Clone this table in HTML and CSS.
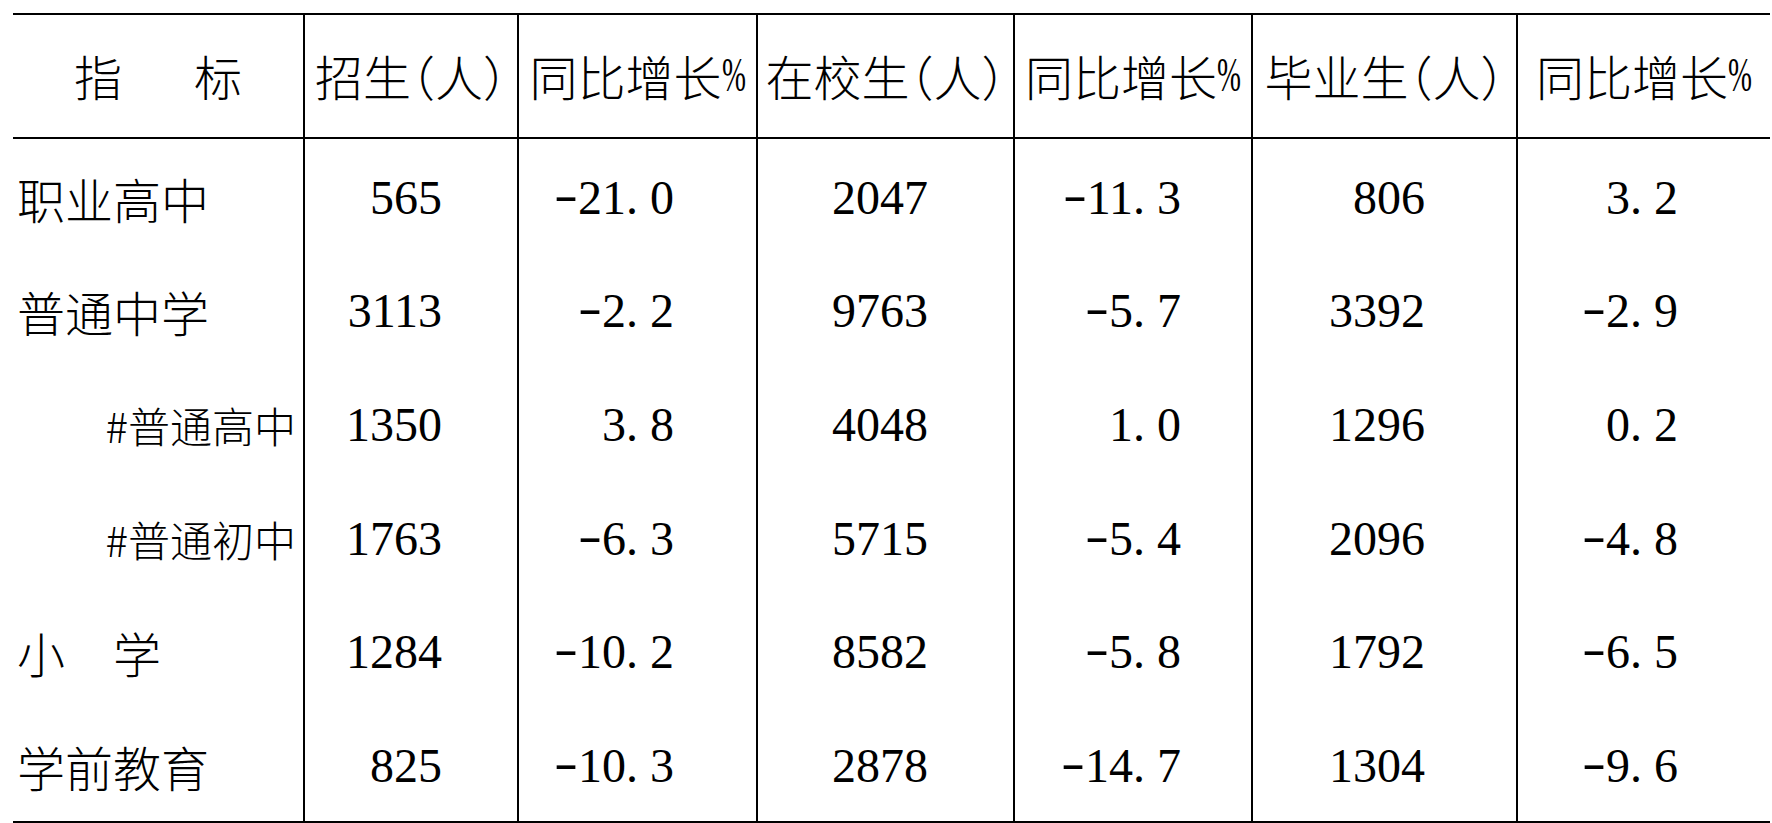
FILE: index.html
```html
<!DOCTYPE html>
<html lang="zh-CN">
<head>
<meta charset="utf-8">
<title>教育统计</title>
<link rel="stylesheet" href="styles.css">
</head>
<body>
<div class="page">
  <div class="sheet">
    <div class="cell head first">指<span class="gap"></span>标</div>
    <div class="cell head">招生（人）</div>
    <div class="cell head">同比增长<span class="pct">%</span></div>
    <div class="cell head">在校生（人）</div>
    <div class="cell head">同比增长<span class="pct">%</span></div>
    <div class="cell head">毕业生（人）</div>
    <div class="cell head">同比增长<span class="pct">%</span></div>

    <div class="cell label">职业高中</div>
    <div class="cell num c2">565</div>
    <div class="cell num c3"><span class="mn">-</span>21<span class="dp">.</span>0</div>
    <div class="cell num c4">2047</div>
    <div class="cell num c5"><span class="mn">-</span>11<span class="dp">.</span>3</div>
    <div class="cell num c6">806</div>
    <div class="cell num c7">3<span class="dp">.</span>2</div>

    <div class="cell label">普通中学</div>
    <div class="cell num c2">3113</div>
    <div class="cell num c3"><span class="mn">-</span>2<span class="dp">.</span>2</div>
    <div class="cell num c4">9763</div>
    <div class="cell num c5"><span class="mn">-</span>5<span class="dp">.</span>7</div>
    <div class="cell num c6">3392</div>
    <div class="cell num c7"><span class="mn">-</span>2<span class="dp">.</span>9</div>

    <div class="cell label sub">#普通高中</div>
    <div class="cell num c2">1350</div>
    <div class="cell num c3">3<span class="dp">.</span>8</div>
    <div class="cell num c4">4048</div>
    <div class="cell num c5">1<span class="dp">.</span>0</div>
    <div class="cell num c6">1296</div>
    <div class="cell num c7">0<span class="dp">.</span>2</div>

    <div class="cell label sub">#普通初中</div>
    <div class="cell num c2">1763</div>
    <div class="cell num c3"><span class="mn">-</span>6<span class="dp">.</span>3</div>
    <div class="cell num c4">5715</div>
    <div class="cell num c5"><span class="mn">-</span>5<span class="dp">.</span>4</div>
    <div class="cell num c6">2096</div>
    <div class="cell num c7"><span class="mn">-</span>4<span class="dp">.</span>8</div>

    <div class="cell label">小　学</div>
    <div class="cell num c2">1284</div>
    <div class="cell num c3"><span class="mn">-</span>10<span class="dp">.</span>2</div>
    <div class="cell num c4">8582</div>
    <div class="cell num c5"><span class="mn">-</span>5<span class="dp">.</span>8</div>
    <div class="cell num c6">1792</div>
    <div class="cell num c7"><span class="mn">-</span>6<span class="dp">.</span>5</div>

    <div class="cell label">学前教育</div>
    <div class="cell num c2">825</div>
    <div class="cell num c3"><span class="mn">-</span>10<span class="dp">.</span>3</div>
    <div class="cell num c4">2878</div>
    <div class="cell num c5"><span class="mn">-</span>14<span class="dp">.</span>7</div>
    <div class="cell num c6">1304</div>
    <div class="cell num c7"><span class="mn">-</span>9<span class="dp">.</span>6</div>
  </div>
</div>
</body>
</html>
```

FILE: styles.css
```css
html, body {
  margin: 0;
  padding: 0;
  background: #ffffff;
  overflow: hidden;
}

.page {
  padding: 13px 0 0 13px;
}

.sheet {
  width: 1757px;
  display: grid;
  grid-template-columns: 290px 214px 239px 257px 238px 265px 254px;
  grid-template-rows: 124px repeat(6, 113.67px);
  border-top: 2px solid #000;
  border-bottom: 2px solid #000;
  color: #000;
  font-family: "Noto Sans CJK SC", "Noto Sans CJK TC", sans-serif;
  font-weight: 300;
  font-size: 48px;
  line-height: 1;
}

.cell {
  box-sizing: border-box;
  display: flex;
  align-items: center;
  border-left: 2px solid #000;
  white-space: nowrap;
}

.cell:nth-child(7n + 1) {
  border-left: none;
}

.head {
  justify-content: center;
  border-bottom: 2px solid #000;
  padding-bottom: 2px;
  font-feature-settings: "halt" 1;
}

.pct {
  display: inline-block;
  width: 0.5em;
  font-family: "Liberation Serif", serif;
  font-weight: 400;
  transform: scaleX(0.6);
  transform-origin: left center;
}

.gap {
  display: inline-block;
  width: 1.5em;
}

.label {
  justify-content: flex-start;
  padding-left: 4px;
  padding-top: 4px;
}

.label.sub {
  justify-content: flex-end;
  padding-left: 0;
  padding-right: 7px;
  font-size: 42px;
}

.num {
  justify-content: flex-end;
  font-family: "Liberation Serif", "Times New Roman", serif;
  font-weight: 400;
  font-size: 48px;
  padding-top: 4px;
}

.mn {
  display: inline-block;
  width: 0.5em;
  text-align: center;
  transform: scaleX(1.5) translateY(-0.06em);
}

.dp {
  display: inline-block;
  width: 0.5em;
  text-align: left;
}

.c2 { padding-right: 75px; }
.c3 { padding-right: 82px; }
.c4 { padding-right: 85px; }
.c5 { padding-right: 70px; }
.c6 { padding-right: 91px; }
.c7 { padding-right: 92px; }
```
